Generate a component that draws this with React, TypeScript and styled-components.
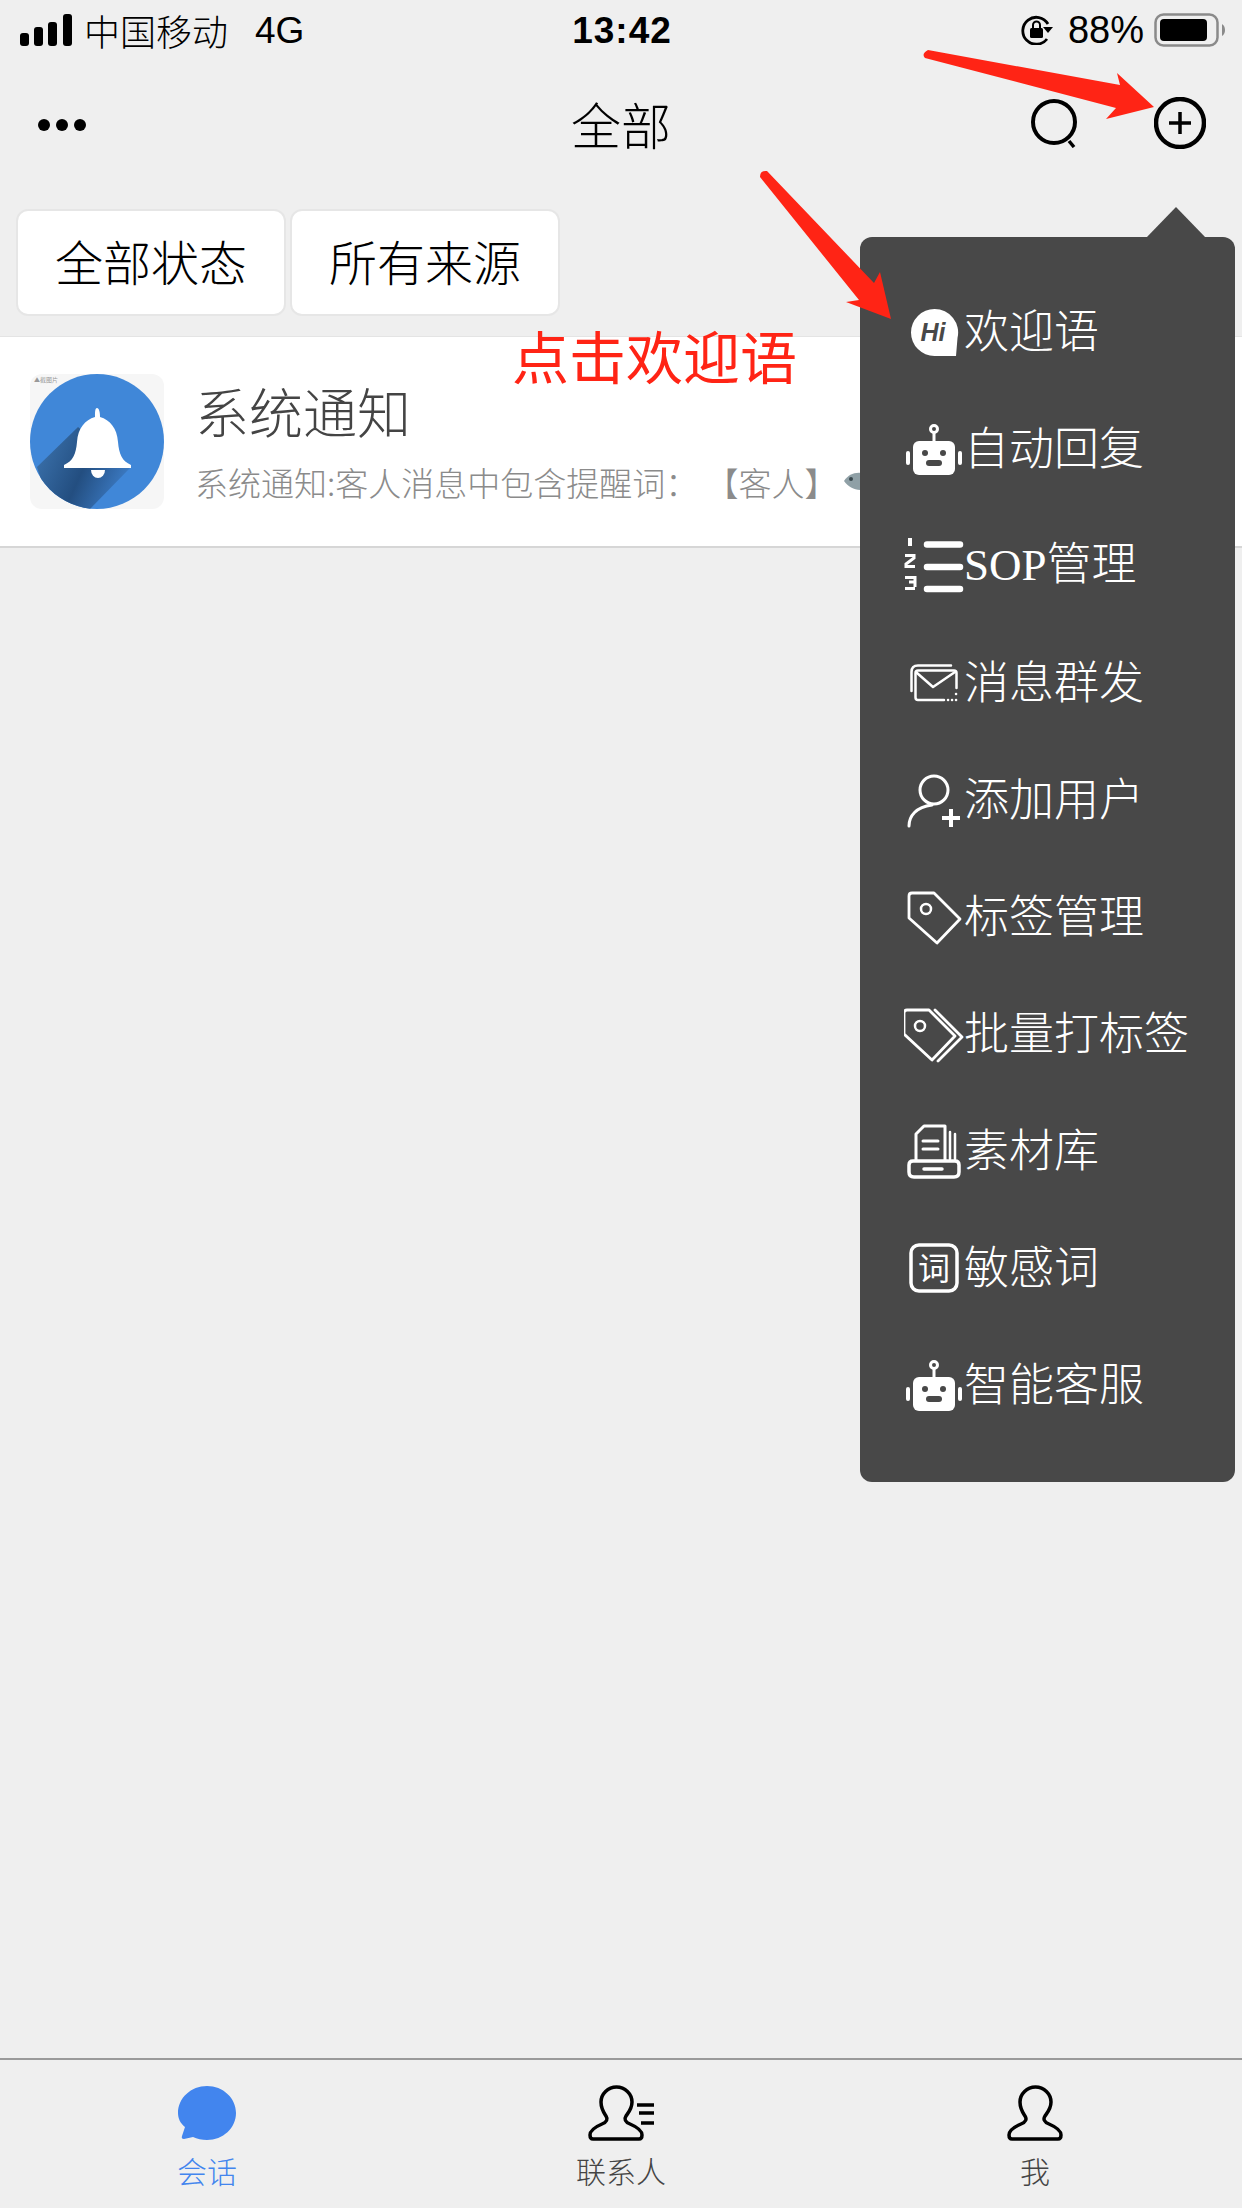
import React from 'react';
import styled, { createGlobalStyle } from 'styled-components';

const color = {
  page: '#efefef',
  popup: '#484848',
  red: '#ff2415',
  blue: '#4285ee',
  line: '#d6d6d6',
};

const cjk = '"Noto Sans CJK SC", "Liberation Sans", sans-serif';

const GlobalStyle = createGlobalStyle`
  html, body {
    margin: 0;
    padding: 0;
    background: ${color.page};
  }
  * {
    box-sizing: border-box;
  }
`;

const Page = styled.div`
  position: relative;
  display: flex;
  flex-direction: column;
  width: 1242px;
  height: 2208px;
  overflow: hidden;
  background: ${color.page};
  font-family: ${cjk};
  color: #000;
`;

const StatusBar = styled.div`
  display: grid;
  grid-template-columns: 1fr auto 1fr;
  align-items: center;
  height: 60px;
  padding: 0 16px 0 20px;
`;
const StatusLeft = styled.div`
  display: flex;
  align-items: center;
`;
const Carrier = styled.span`
  font-size: 36px;
  font-weight: 300;
  line-height: 1;
  margin-left: 12px;
`;
const Network = styled.span`
  font-family: 'Liberation Sans', sans-serif;
  font-size: 37px;
  line-height: 1;
  margin-left: 27px;
`;
const Time = styled.span`
  font-family: 'Liberation Sans', sans-serif;
  font-size: 37px;
  font-weight: 700;
  letter-spacing: 1px;
  line-height: 1;
  margin-left: -2px;
`;
const StatusRight = styled.div`
  display: flex;
  align-items: center;
  justify-content: flex-end;
`;
const Battery = styled.span`
  font-family: 'Liberation Sans', sans-serif;
  font-size: 38px;
  line-height: 1;
  margin: 0 10px 0 14px;
`;

const NavBar = styled.div`
  display: grid;
  grid-template-columns: 1fr auto 1fr;
  align-items: center;
  height: 126px;
  padding: 0 36px 0 38px;
`;
const Dots = styled.div`
  display: flex;
  gap: 6px;
  margin-top: 4px;
`;
const Dot = styled.i`
  width: 12px;
  height: 12px;
  border-radius: 50%;
  background: #000;
`;
const NavTitle = styled.h1`
  margin: 0 2px 0 0;
  font-size: 50px;
  font-weight: 300;
  line-height: 1;
`;
const NavActions = styled.div`
  display: flex;
  align-items: center;
  justify-content: flex-end;
  gap: 73px;
`;

const Filters = styled.div`
  display: flex;
  gap: 4px;
  padding: 23px 16px 20px;
`;
const FilterButton = styled.div`
  display: flex;
  align-items: center;
  justify-content: center;
  width: 270px;
  height: 107px;
  padding-bottom: 5px;
  background: #fff;
  border: 2px solid #e6e6e6;
  border-radius: 12px;
  font-size: 48px;
  font-weight: 300;
`;

const Row = styled.div`
  display: flex;
  align-items: center;
  gap: 31px;
  height: 212px;
  padding-left: 30px;
  background: #fff;
  border-top: 1px solid #e4e4e4;
  border-bottom: 2px solid ${color.line};
`;
const RowBody = styled.div`
  display: flex;
  flex-direction: column;
  gap: 21px;
  white-space: nowrap;
`;
const RowTitle = styled.div`
  font-size: 54px;
  font-weight: 300;
  line-height: 60px;
  color: #444;
`;
const RowText = styled.div`
  display: flex;
  align-items: center;
  font-size: 33px;
  font-weight: 300;
  line-height: 40px;
  color: #8b8b8b;
`;
const Fish = styled.svg`
  flex: none;
  width: 30px;
  height: 26px;
  margin-left: 6px;
`;

const Spacer = styled.div`
  flex: 1;
`;

const TabBar = styled.div`
  display: grid;
  grid-template-columns: repeat(3, 1fr);
  height: 150px;
  border-top: 2px solid #9a9a9a;
`;
const Tab = styled.div<{ $active?: boolean }>`
  display: flex;
  flex-direction: column;
  align-items: center;
  padding-top: 24px;
  font-size: 30px;
  font-weight: 300;
  line-height: 36px;
  color: ${({ $active }) => ($active ? color.blue : '#444')};
`;
const TabIcon = styled.svg`
  display: block;
  width: 70px;
  height: 58px;
  margin-bottom: 10px;
`;

const Popup = styled.div`
  position: absolute;
  left: 860px;
  top: 237px;
  width: 375px;
  height: 1245px;
  padding: 36px 0 0 44px;
  background: ${color.popup};
  border-radius: 12px;
  color: #fff;
  &::before {
    content: '';
    position: absolute;
    left: 286px;
    top: -30px;
    border-left: 30px solid transparent;
    border-right: 30px solid transparent;
    border-bottom: 31px solid ${color.popup};
  }
`;
const MenuRow = styled.div`
  display: flex;
  align-items: center;
  height: 117px;
`;
const MenuIcon = styled.svg`
  flex: none;
  width: 60px;
  height: 60px;
  fill: none;
  stroke: #fff;
  stroke-width: 3.5;
  stroke-linecap: round;
  stroke-linejoin: round;
`;
const MenuLabel = styled.span`
  margin-bottom: 6px;
  font-size: 45px;
  font-weight: 300;
  line-height: 1;
  white-space: nowrap;
`;
const Latin = styled.span`
  font-family: 'Liberation Serif', serif;
`;

const Annotation = styled.svg`
  position: absolute;
  left: 0;
  top: 0;
  width: 1242px;
  height: 400px;
  pointer-events: none;
`;
const RedNote = styled.div`
  position: absolute;
  left: 512px;
  top: 316px;
  font-size: 57px;
  line-height: 76px;
  font-weight: 400;
  color: ${color.red};
  white-space: nowrap;
`;

const RobotIcon = () => (
  <MenuIcon viewBox="0 0 60 60">
    <circle cx="30" cy="10" r="3.5" strokeWidth="3" />
    <path d="M30 14v8" strokeWidth="3" />
    <rect x="9" y="22" width="42" height="34" rx="6" fill="#fff" stroke="none" />
    <rect x="2" y="32" width="4" height="14" rx="2" fill="#fff" stroke="none" />
    <rect x="54" y="32" width="4" height="14" rx="2" fill="#fff" stroke="none" />
    <circle cx="21" cy="34" r="3" fill="#484848" stroke="none" />
    <circle cx="39" cy="34" r="3" fill="#484848" stroke="none" />
    <rect x="22" y="41" width="16" height="6" rx="3" fill="#484848" stroke="none" />
  </MenuIcon>
);

const HiIcon = () => (
  <MenuIcon viewBox="0 0 60 60">
    <path
      d="M30.5 7A23.500 23.500 0 0 1 53.500 36L52 54H30.500A23.500 23.500 0 1 1 30.500 7Z"
      fill="#fff"
      stroke="none"
    />
    <text
      x="29"
      y="39"
      textAnchor="middle"
      fontFamily="'Liberation Sans', sans-serif"
      fontSize="25"
      fontWeight="700"
      fontStyle="italic"
      fill="#484848"
      stroke="none"
    >
      Hi
    </text>
  </MenuIcon>
);

const SopIcon = () => (
  <MenuIcon viewBox="0 0 60 60">
    <path d="M23 8.500H56M23 31H56M23 53H56" strokeWidth="6.500" />
    <path d="M6 2V10" strokeWidth="4" strokeLinecap="butt" />
    <path d="M1 19.500H10V22L2 28V30.500H11" strokeWidth="3" strokeLinecap="butt" strokeLinejoin="miter" />
    <path d="M1 41.500H11V46H5M11 46V51M11 52.500H1" strokeWidth="3" strokeLinecap="butt" strokeLinejoin="miter" />
  </MenuIcon>
);

const MailIcon = () => (
  <MenuIcon viewBox="0 0 60 60">
    <path d="M7.500 38V19Q7.500 12.500 14 12.500H47" strokeWidth="2.500" />
    <path d="M40 47H14Q11.500 47 11.500 44.500V20Q11.500 17.500 14 17.500H50Q52.500 17.500 52.500 20V35" strokeWidth="2.500" />
    <path d="M13 20L29 34L51 19" strokeWidth="2.500" />
    <path d="M44 47h.1M48 47h.1M52 47h.1M52 41h.1" strokeWidth="2.500" />
  </MenuIcon>
);

const AddUserIcon = () => (
  <MenuIcon viewBox="0 0 60 60">
    <circle cx="30" cy="20" r="14" strokeWidth="3" />
    <path d="M5 56C5 46 12 37 28 35" strokeWidth="3" />
    <path d="M38 48H56M47 39V57" strokeWidth="4" strokeLinecap="butt" />
  </MenuIcon>
);

const TagIcon = () => (
  <MenuIcon viewBox="0 0 60 60">
    <path d="M8 6H30L56 32L33 56L5 31V9Q5 6 8 6Z" strokeWidth="2.800" />
    <circle cx="22" cy="22" r="5" strokeWidth="2.500" />
  </MenuIcon>
);

const TagsIcon = () => (
  <MenuIcon viewBox="0 0 60 60">
    <path d="M3 6H25L51 32L28 56L0 30V9Q0 6 3 6Z" strokeWidth="2.800" />
    <circle cx="16" cy="22" r="5" strokeWidth="2.500" />
    <path d="M31 6L58 33L34 57" strokeWidth="2.800" />
  </MenuIcon>
);

const LibraryIcon = () => (
  <MenuIcon viewBox="0 0 60 60">
    <path d="M5 44Q5 40 9 40H51Q55 40 55 44V51Q55 56 50 56H10Q5 56 5 51Z" />
    <path d="M20 48H38" />
    <path d="M12 39V13L20 5H41V39" strokeWidth="3" />
    <path d="M19 20H34M19 28H34" strokeWidth="3" />
    <path d="M46 11V38M51 13V38" strokeWidth="2.500" />
  </MenuIcon>
);

const WordIcon = () => (
  <MenuIcon viewBox="0 0 60 60">
    <rect x="7" y="7" width="46" height="46" rx="8" />
    <text
      x="30"
      y="42"
      textAnchor="middle"
      fontFamily={cjk}
      fontSize="32"
      fontWeight="400"
      fill="#fff"
      stroke="none"
    >
      词
    </text>
  </MenuIcon>
);

const menu: { icon: React.FC; label: React.ReactNode }[] = [
  { icon: HiIcon, label: '欢迎语' },
  { icon: RobotIcon, label: '自动回复' },
  {
    icon: SopIcon,
    label: (
      <>
        <Latin>SOP</Latin>管理
      </>
    ),
  },
  { icon: MailIcon, label: '消息群发' },
  { icon: AddUserIcon, label: '添加用户' },
  { icon: TagIcon, label: '标签管理' },
  { icon: TagsIcon, label: '批量打标签' },
  { icon: LibraryIcon, label: '素材库' },
  { icon: WordIcon, label: '敏感词' },
  { icon: RobotIcon, label: '智能客服' },
];

const Avatar = () => (
  <svg width="134" height="135" viewBox="0 0 134 135" style={{ flex: 'none' }}>
    <defs>
      <clipPath id="avatar-circle">
        <ellipse cx="67" cy="67.500" rx="67" ry="67.500" />
      </clipPath>
      <linearGradient id="avatar-shadow" x1="0" y1="0.3" x2="1" y2="0.7">
        <stop offset="0" stopColor="#3a70aa" />
        <stop offset="0.5" stopColor="#234e80" />
        <stop offset="1" stopColor="#3f80cc" />
      </linearGradient>
    </defs>
    <rect width="134" height="135" rx="12" fill="#f6f6f6" />
    <text x="4" y="8" fontFamily={cjk} fontSize="6" fill="#999">
      ▲截图片
    </text>
    <ellipse cx="67" cy="67.500" rx="67" ry="67.500" fill="#4087d8" />
    <g clipPath="url(#avatar-circle)">
      <path d="M48 53L100 94L60 135H20L7 93Z" fill="url(#avatar-shadow)" />
    </g>
    <path
      d="M67 34C69 34 70 38 70 43C80 46 87 54 88 68C89 80 92 87 101 91V94H34V91C43 87 46 80 47 68C48 54 55 46 65 43C65 38 65 34 67 34Z"
      fill="#fff"
    />
    <path d="M61 96H75A7 8 0 0 1 61 96Z" fill="#fff" />
  </svg>
);

const Person = ({ x }: { x: number }) => (
  <path
    transform={`translate(${x} 0)`}
    d="M28.500 3C37 3 44 10 44 18C44 25 40 29 38 32C36 35 37 38 42 40C49 43 54 47 54 51C54 54 53 55 51 55H5C3 55 2 54 2 51C2 47 7 43 14 40C19 38 20 35 18 32C16 29 13 25 13 18C13 10 20 3 28.500 3Z"
    fill="none"
    stroke="#000"
    strokeWidth="3.500"
  />
);

export default function App() {
  return (
    <Page>
      <GlobalStyle />
      <StatusBar>
        <StatusLeft>
          <svg width="52" height="32" viewBox="0 0 52 32">
            <rect x="0" y="19" width="9" height="13" rx="3" />
            <rect x="14" y="13" width="9" height="19" rx="3" />
            <rect x="28" y="8" width="9" height="24" rx="3" />
            <rect x="43" y="0" width="9" height="32" rx="3" />
          </svg>
          <Carrier>中国移动</Carrier>
          <Network>4G</Network>
        </StatusLeft>
        <Time>13:42</Time>
        <StatusRight>
          <svg width="34" height="30" viewBox="0 0 34 30">
            <path d="M27 24A13.500 13.500 0 1 1 28 9" fill="none" stroke="#000" strokeWidth="2.800" />
            <path d="M23 12H33L28 18Z" />
            <rect x="10" y="13" width="13" height="10" rx="1.500" />
            <path d="M13 13V10A3.500 3.500 0 0 1 20 10V13" fill="none" stroke="#000" strokeWidth="2" />
          </svg>
          <Battery>88%</Battery>
          <svg width="72" height="34" viewBox="0 0 72 34">
            <rect x="1.500" y="1.500" width="62" height="31" rx="8" fill="none" stroke="#8a8a8a" strokeWidth="2.500" />
            <rect x="6" y="6" width="47" height="22" rx="4" />
            <path d="M68 11Q71 13 71 17Q71 21 68 23Z" fill="#8a8a8a" />
          </svg>
        </StatusRight>
      </StatusBar>

      <NavBar>
        <Dots>
          <Dot />
          <Dot />
          <Dot />
        </Dots>
        <NavTitle>全部</NavTitle>
        <NavActions>
          <svg width="50" height="50" viewBox="0 0 50 50">
            <circle cx="23" cy="24" r="21" fill="none" stroke="#000" strokeWidth="4" />
            <path d="M38 43L43 49" stroke="#000" strokeWidth="3.500" />
          </svg>
          <svg width="52" height="52" viewBox="0 0 52 52">
            <circle cx="26" cy="26" r="24" fill="none" stroke="#000" strokeWidth="4.500" />
            <path d="M15 26H37M26 15V37" stroke="#000" strokeWidth="3.500" />
          </svg>
        </NavActions>
      </NavBar>

      <Filters>
        <FilterButton>全部状态</FilterButton>
        <FilterButton>所有来源</FilterButton>
      </Filters>

      <Row>
        <Avatar />
        <RowBody>
          <RowTitle>系统通知</RowTitle>
          <RowText>
            系统通知:客人消息中包含提醒词： 【客人】
            <Fish viewBox="0 0 30 26">
              <path d="M0 12C6 3 16 1 30 8L26 18C16 24 6 20 0 12Z" fill="#8fa0a6" />
              <circle cx="7" cy="10" r="2" fill="#39474d" />
            </Fish>
          </RowText>
        </RowBody>
      </Row>

      <Spacer />

      <TabBar>
        <Tab $active>
          <TabIcon viewBox="0 0 70 58">
            <path
              d="M35 2C51 2 64 14 64 29C64 44 51 56 35 56C30 56 25 55 21 53L12 55Q9 55 10 52L13 43C8 39 6 34 6 29C6 14 19 2 35 2Z"
              fill={color.blue}
            />
          </TabIcon>
          会话
        </Tab>
        <Tab>
          <TabIcon viewBox="0 0 70 58">
            <Person x={2} />
            <path d="M51 21H68M53 29H68M55 39H68" stroke="#000" strokeWidth="3.500" />
          </TabIcon>
          联系人
        </Tab>
        <Tab>
          <TabIcon viewBox="0 0 70 58">
            <Person x={7} />
          </TabIcon>
          我
        </Tab>
      </TabBar>

      <Popup>
        {menu.map(({ icon: Icon, label }, i) => (
          <MenuRow key={i}>
            <Icon />
            <MenuLabel>{label}</MenuLabel>
          </MenuRow>
        ))}
      </Popup>

      <RedNote>点击欢迎语</RedNote>
      <Annotation viewBox="0 0 1242 400">
        <path
          d="M928 50L1120 85L1117 73L1154 107L1106 119L1116 108L925 58Q921 54 928 50Z"
          fill={color.red}
        />
        <path
          d="M767 171L874 283L880 272L891 319L846 302L859 300L760 177Q760 170 767 171Z"
          fill={color.red}
        />
      </Annotation>
    </Page>
  );
}
